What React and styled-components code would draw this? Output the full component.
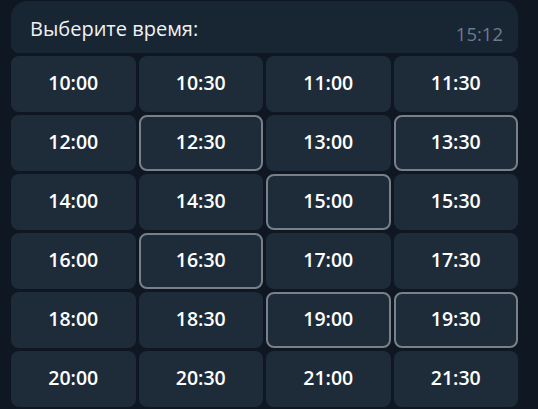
import React from "react";
import styled, { createGlobalStyle } from "styled-components";

const Global = createGlobalStyle`
  html, body { margin: 0; padding: 0; background: #0f1822; }
  body { font-family: "Open Sans", "Noto Sans", sans-serif; }
`;

const Page = styled.div`
  width: 538px;
  height: 409px;
  box-sizing: border-box;
  padding: 1px 20px 0 11px;
  background: #0f1822;
  display: flex;
  flex-direction: column;
  gap: 3px;
  overflow: hidden;
`;

const Bubble = styled.div`
  height: 52px;
  box-sizing: border-box;
  background: #182533;
  border-radius: 16px 16px 8px 8px;
  padding: 15px 15px 0 19px;
  display: flex;
  justify-content: space-between;
  align-items: flex-start;
`;

const Title = styled.div`
  color: #f0f2f4;
  font-size: 20px;
  line-height: 26px;
  font-weight: 400;
`;

const Time = styled.div`
  color: #6b7c8c;
  font-size: 18.5px;
  line-height: 26px;
  margin-top: 5px;
`;

const Grid = styled.div`
  display: grid;
  grid-template-columns: repeat(4, 1fr);
  grid-auto-rows: 56px;
  gap: 3px;
`;

const Slot = styled.button`
  font-family: "Open Sans", "Noto Sans", sans-serif;
  background: #1e2c3a;
  color: #ffffff;
  font-size: 19.5px;
  font-weight: 600;
  border-radius: 8px;
  border: 2px solid ${(p) => (p.$selected ? "#788089" : "transparent")};
  padding: 0 0 3px 0;
  margin: 0;
  display: flex;
  align-items: center;
  justify-content: center;
  cursor: pointer;
`;

const slots = [
  "10:00", "10:30", "11:00", "11:30",
  "12:00", "12:30", "13:00", "13:30",
  "14:00", "14:30", "15:00", "15:30",
  "16:00", "16:30", "17:00", "17:30",
  "18:00", "18:30", "19:00", "19:30",
  "20:00", "20:30", "21:00", "21:30",
];
const selected = new Set(["12:30", "13:30", "15:00", "16:30", "19:00", "19:30"]);

export default function App() {
  return (
    <>
      <Global />
      <Page>
        <Bubble>
          <Title>Выберите время:</Title>
          <Time>15:12</Time>
        </Bubble>
        <Grid>
          {slots.map((s) => (
            <Slot key={s} $selected={selected.has(s)}>
              {s}
            </Slot>
          ))}
        </Grid>
      </Page>
    </>
  );
}
